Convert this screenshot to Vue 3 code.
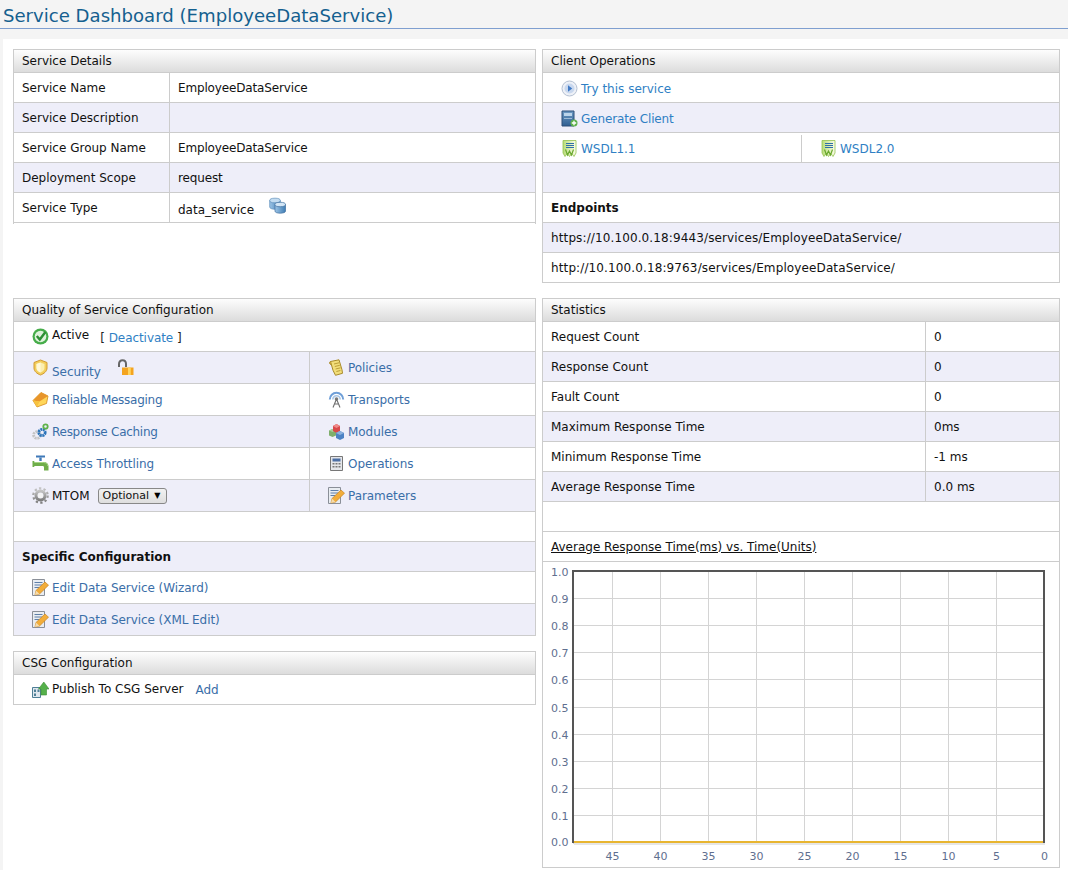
<template>
  <div class="page">
    <svg class="defs">
      <defs>
        <linearGradient id="g-gear" x1="0" y1="0" x2="0" y2="1">
          <stop offset="0" stop-color="#c4c4c4" />
          <stop offset="1" stop-color="#7e7e7e" />
        </linearGradient>
        <linearGradient id="g-book" x1="0" y1="0" x2="0" y2="1">
          <stop offset="0" stop-color="#6e9ac4" />
          <stop offset="1" stop-color="#2f5f92" />
        </linearGradient>
        <linearGradient id="g-wsdl" x1="0" y1="0" x2="1" y2="0">
          <stop offset="0" stop-color="#b8dc78" />
          <stop offset="1" stop-color="#fbfde8" />
        </linearGradient>
        <linearGradient id="g-can" x1="0" y1="0" x2="1" y2="0">
          <stop offset="0" stop-color="#9cc4e6" />
          <stop offset="1" stop-color="#3f7db4" />
        </linearGradient>
      </defs>
      <symbol id="i-try" viewBox="0 0 17 17">
        <circle cx="8.500" cy="8.500" r="7.500" fill="#eef1f7" stroke="#b4c0d2" />
        <circle cx="8.500" cy="8.500" r="5" fill="#c9d8ee" />
        <path d="M7 5.200 11.200 8.500 7 11.800z" fill="#3f79c4" />
      </symbol>
      <symbol id="i-client" viewBox="0 0 17 17">
        <path d="M1 1h12v15H1z" fill="url(#g-book)" stroke="#2c4f78" />
        <path d="M3 3h8v3H3z" fill="#bcd4ea" />
        <path d="M3 8h8v1H3z" fill="#9dbad6" />
        <circle cx="13" cy="13" r="3.500" fill="#5db04a" />
        <path d="M13 10.800v4.400M10.800 13h4.400" stroke="#fff" stroke-width="1.300" />
      </symbol>
      <symbol id="i-wsdl" viewBox="0 0 17 17">
        <path d="M2 .5h13V13l-2 3.500-2.200-3-2.300 3-2.300-3-2.200 3-2-3.500z" fill="url(#g-wsdl)" stroke="#93c14f" stroke-width=".8" />
        <path d="M5 3.500h8M5 5.500h8M5 7.500h8" stroke="#2f6fa8" stroke-width="1.100" />
        <path d="m4.500 9.500 2 5.500 2-4 2 4 2-5.500" fill="none" stroke="#6aa82f" stroke-width="1.200" />
      </symbol>
      <symbol id="i-db" viewBox="0 0 17 16">
        <path d="M.7 3v6.500c0 1.300 2.300 2.300 5.300 2.300s5.300-1 5.300-2.300V3z" fill="url(#g-can)" stroke="#5f8fbb" stroke-width=".7" />
        <ellipse cx="6" cy="3" rx="5.300" ry="2.300" fill="#c3dcf1" stroke="#5f8fbb" stroke-width=".7" />
        <path d="M6 7v6.700c0 1.200 2.300 2 5.200 2s5.300-.8 5.300-2V7z" fill="url(#g-can)" stroke="#3f6f9f" stroke-width=".7" />
        <ellipse cx="11.200" cy="7" rx="5.300" ry="2.200" fill="#d3e6f6" stroke="#3f6f9f" stroke-width=".7" />
      </symbol>
      <symbol id="i-active" viewBox="0 0 17 17">
        <circle cx="8.500" cy="8.500" r="8" fill="#46ad4a" />
        <circle cx="8.500" cy="8.500" r="5.800" fill="#dff2dc" />
        <path d="m4.800 8 3 3.500 5.600-7.500" fill="none" stroke="#2e8f35" stroke-width="2.400" />
      </symbol>
      <symbol id="i-shield" viewBox="0 0 17 17">
        <path d="M8.500 1 15 3.500V9c0 3.300-3 5.700-6.500 7C5 14.700 2 12.300 2 9V3.500z" fill="#f3cf5c" stroke="#d29a32" />
        <path d="M8.500 3.500 12.500 5v4c0 2-1.800 3.500-4 4.500-2.200-1-4-2.500-4-4.500V5z" fill="#fbeeb0" />
        <path d="M8.500 3.500v10c-2.200-1-4-2.500-4-4.500V5z" fill="#fff8d8" />
      </symbol>
      <symbol id="i-lock" viewBox="0 0 17 17">
        <path d="M2 8V5c0-2.300 1.500-3.800 3.500-3.800S9 2.700 9 5v3" fill="none" stroke="#666" stroke-width="2" />
        <path d="M5 8.500h11.500V16H5z" fill="#f4a41f" />
        <path d="M11 8.500h2.800V16H11z" fill="#ffd45f" />
      </symbol>
      <symbol id="i-policy" viewBox="0 0 17 17">
        <path d="M2.500 2.500 11 .8l3 10 .5 3.500-7 2-2.500-5z" fill="#f2de7a" stroke="#a88a2a" />
        <path d="M6 5l5-1.200M6.800 7.500l5-1.200M7.600 10l5-1.200M8.400 12.500l4-1" stroke="#b6962f" stroke-width=".9" />
        <path d="M2.500 2.500C.8 3.200 1.500 5.500 3.700 6" fill="#c9a53a" stroke="#a88a2a" />
      </symbol>
      <symbol id="i-reliable" viewBox="0 0 17 17">
        <path d="M1 9.500 9 1.500l7 3.500-1.500 7.500L5 16z" fill="#ffd659" stroke="#d58a1c" stroke-width=".8" />
        <path d="M1 9.500 9 1.500l7 3.500-8.500 5.500z" fill="#e8952b" />
        <path d="m1 9.500 6.500 1L5 16z" fill="#f7c23f" />
      </symbol>
      <symbol id="i-transport" viewBox="0 0 17 17">
        <path d="M1.800 8.500a6.700 6.700 0 0 1 13.400 0" fill="none" stroke="#6f9fd8" stroke-width="2" />
        <path d="M4.800 8.500a3.700 3.700 0 0 1 7.400 0" fill="none" stroke="#a9c6e6" stroke-width="1.600" />
        <circle cx="8.500" cy="8" r="1.800" fill="#7f7f7f" />
        <path d="m8.500 8-3.500 8.500M8.500 8l3.500 8.500M6.300 13h4.400" stroke="#6f6f6f" stroke-width="1.100" fill="none" />
      </symbol>
      <symbol id="i-cache" viewBox="0 0 17 17">
        <circle cx="5" cy="12" r="3.400" fill="none" stroke="#c4c4c4" stroke-width="2.800" stroke-dasharray="2 .8" />
        <circle cx="10" cy="9.500" r="3.200" fill="none" stroke="#2c74ba" stroke-width="2.800" stroke-dasharray="2 .6" />
        <circle cx="13.500" cy="3.500" r="2.200" fill="none" stroke="#5fb24a" stroke-width="1.800" />
      </symbol>
      <symbol id="i-modules" viewBox="0 0 17 17">
        <path d="M1 7.500 4.500 6 8 7.500v5L4.500 14 1 12.500z" fill="#7fae6c" />
        <path d="M1 7.500 4.500 6 8 7.500 4.500 9z" fill="#a8cb98" />
        <path d="M5 3 8.500 1 12 3v5L8.500 10 5 8z" fill="#d8484a" />
        <path d="M5 3 8.500 1 12 3 8.500 5z" fill="#ee8a8a" />
        <path d="M8 10 12 8l4 2v5l-4 2-4-2z" fill="#4c82c4" />
        <path d="M8 10 12 8l4 2-4 2z" fill="#8cb2de" />
      </symbol>
      <symbol id="i-throttle" viewBox="0 0 17 17">
        <path d="M4 .5h9V2.500H4z" fill="#3f79b8" />
        <path d="M7.300 2.500h2.400V6H7.300z" fill="#3f79b8" />
        <path d="M.5 6h1.800v1h9.200c3.300 0 5 1.800 5 4.500v4H12v-3c0-1-.5-1.500-1.500-1.500H2.300v1H.5z" fill="#6fae4a" />
        <path d="M2.300 7.500h9c2.800 0 4.300 1.300 4.500 3.500" fill="none" stroke="#a6d585" />
      </symbol>
      <symbol id="i-ops" viewBox="0 0 17 17">
        <path d="M2.500 1.500h12v14h-12z" fill="#e4e6ea" stroke="#777" />
        <path d="M4.500 3.500h8v3h-8z" fill="#4c6fa5" />
        <path d="M4.500 8h2v1.500h-2zM7.500 8h2v1.500h-2zM10.500 8h2v1.500h-2zM4.500 11h2v1.500h-2zM7.500 11h2v1.500h-2zM10.500 11h2v1.500h-2z" fill="#777" />
      </symbol>
      <symbol id="i-edit" viewBox="0 0 17 17">
        <path d="M.5 .5h12v16H.5z" fill="#e9edf2" stroke="#8a8f98" />
        <path d="M2.500 3.500h8M2.500 6h8M2.500 8.500h5" stroke="#5f7fa8" />
        <path d="m3 16 1-4.500L13 3l3.500 3.200L7.500 15z" fill="#f2ad3a" stroke="#c98420" stroke-width=".7" />
        <path d="m3 16 1-4.500 3.500 3.500z" fill="#f5dcae" />
      </symbol>
      <symbol id="i-gear" viewBox="0 0 17 17">
        <circle cx="8.500" cy="8.500" r="7.200" fill="none" stroke="url(#g-gear)" stroke-width="2.200" stroke-dasharray="2.300 2.300" />
        <circle cx="8.500" cy="8.500" r="4.500" fill="none" stroke="url(#g-gear)" stroke-width="3" />
        <circle cx="8.500" cy="8.500" r="2.600" fill="#f4f4f4" />
      </symbol>
      <symbol id="i-publish" viewBox="0 0 17 17">
        <path d="M.5 6.500h8v10h-8z" fill="#dfe7ee" stroke="#4f7f96" />
        <path d="M2 8.500h2v2.500H2zM5.500 8.500h2v2.500h-2zM2 12.500h2V15H2z" fill="#4f7f96" />
        <path d="M9 14V8H6.500L11.800 1 17 8h-2.500v6z" fill="#55b04a" stroke="#3c8f36" stroke-width=".6" />
      </symbol>
    </svg>

    <h1 class="page-title">Service Dashboard (EmployeeDataService)</h1>

    <div class="content">
      <div class="col">
        <section class="panel details">
          <h3 class="panel-head">Service Details</h3>
          <div v-for="(d, i) in details" :key="d.label" class="row" :class="{ alt: i % 2 }">
            <div class="cell label-cell">{{ d.label }}</div>
            <div class="cell service-value">
              <span :class="{ nudge: d.icon }">{{ d.value }}</span>
              <svg v-if="d.icon" class="ic db"><use href="#i-db" /></svg>
            </div>
          </div>
        </section>

        <section class="panel qos">
          <h3 class="panel-head">Quality of Service Configuration</h3>
          <div class="row pad">
            <svg class="ic"><use href="#i-active" /></svg>
            <span class="raise">Active</span>
            <span class="bracket">[ <a class="link top">Deactivate</a> ]</span>
          </div>
          <div v-for="(q, i) in qos" :key="q.right" class="row tall" :class="{ alt: i % 2 === 0 }">
            <div class="cell qos-left">
              <svg class="ic"><use :href="q.leftIcon" /></svg>
              <template v-if="q.mtom">
                <span>MTOM</span>
                <span class="select">Optional <i class="arrow">▼</i></span>
              </template>
              <a v-else class="link" :class="{ tight: q.tight, drop: q.lock }">{{ q.left }}</a>
              <svg v-if="q.lock" class="ic lock"><use href="#i-lock" /></svg>
            </div>
            <div class="cell qos-right">
              <svg class="ic"><use :href="q.rightIcon" /></svg>
              <a class="link">{{ q.right }}</a>
            </div>
          </div>
          <div class="row"></div>
          <div class="row alt text-row"><b>Specific Configuration</b></div>
          <div class="row tall pad">
            <svg class="ic"><use href="#i-edit" /></svg>
            <a class="link">Edit Data Service (Wizard)</a>
          </div>
          <div class="row tall pad alt">
            <svg class="ic"><use href="#i-edit" /></svg>
            <a class="link">Edit Data Service (XML Edit)</a>
          </div>
        </section>

        <section class="panel csg">
          <h3 class="panel-head">CSG Configuration</h3>
          <div class="row pad">
            <svg class="ic"><use href="#i-publish" /></svg>
            <span class="raise-1">Publish To CSG Server</span>
            <a class="link add">Add</a>
          </div>
        </section>
      </div>

      <div class="col">
        <section class="panel client">
          <h3 class="panel-head">Client Operations</h3>
          <div class="row pad low">
            <svg class="ic"><use href="#i-try" /></svg>
            <a class="link top">Try this service</a>
          </div>
          <div class="row pad low alt">
            <svg class="ic"><use href="#i-client" /></svg>
            <a class="link top gen">Generate Client</a>
          </div>
          <div class="row low">
            <div class="cell wsdl first">
              <svg class="ic"><use href="#i-wsdl" /></svg>
              <a class="link top">WSDL1.1</a>
            </div>
            <div class="cell wsdl">
              <svg class="ic"><use href="#i-wsdl" /></svg>
              <a class="link top">WSDL2.0</a>
            </div>
          </div>
          <div class="row alt"></div>
          <div class="row text-row"><b>Endpoints</b></div>
          <div class="row text-row alt endpoint">https://10.100.0.18:9443/services/EmployeeDataService/</div>
          <div class="row text-row endpoint">http://10.100.0.18:9763/services/EmployeeDataService/</div>
        </section>

        <section class="panel stats">
          <h3 class="panel-head">Statistics</h3>
          <div v-for="(s, i) in stats" :key="s.label" class="row" :class="{ alt: i % 2 }">
            <div class="cell stat-label">{{ s.label }}</div>
            <div class="cell">{{ s.value }}</div>
          </div>
          <div class="row"></div>
          <div class="row text-row"><u>Average Response Time(ms) vs. Time(Units)</u></div>
          <svg class="chart" width="516" height="305" viewBox="0 0 516 305">
            <line v-for="x in vLines" :key="'v' + x" :x1="x" :x2="x" y1="9" y2="280" class="grid" />
            <line v-for="t in yTicks" :key="'h' + t.y" x1="30" x2="501" :y1="t.y" :y2="t.y" class="grid" />
            <text v-for="t in yTicks" :key="'y' + t.y" x="8" :y="t.labelY" class="tick">{{ t.label }}</text>
            <text v-for="t in xTicks" :key="'x' + t.label" :x="t.x" y="298" text-anchor="middle" class="tick">{{ t.label }}</text>
            <line x1="31" x2="502" y1="282" y2="282" class="shadow" />
            <rect x="30" y="9" width="471" height="271" class="frame" />
            <line x1="31" x2="500" y1="280" y2="280" class="series" />
          </svg>
        </section>
      </div>
    </div>
  </div>
</template>

<script setup>
const details = [
  { label: 'Service Name', value: 'EmployeeDataService' },
  { label: 'Service Description', value: '' },
  { label: 'Service Group Name', value: 'EmployeeDataService' },
  { label: 'Deployment Scope', value: 'request' },
  { label: 'Service Type', value: 'data_service', icon: true },
]

const qos = [
  { left: 'Security', leftIcon: '#i-shield', lock: true, right: 'Policies', rightIcon: '#i-policy' },
  { left: 'Reliable Messaging', leftIcon: '#i-reliable', tight: true, right: 'Transports', rightIcon: '#i-transport' },
  { left: 'Response Caching', leftIcon: '#i-cache', tight: true, right: 'Modules', rightIcon: '#i-modules' },
  { left: 'Access Throttling', leftIcon: '#i-throttle', right: 'Operations', rightIcon: '#i-ops' },
  { mtom: true, leftIcon: '#i-gear', right: 'Parameters', rightIcon: '#i-edit' },
]

const stats = [
  { label: 'Request Count', value: '0' },
  { label: 'Response Count', value: '0' },
  { label: 'Fault Count', value: '0' },
  { label: 'Maximum Response Time', value: '0ms' },
  { label: 'Minimum Response Time', value: '-1 ms' },
  { label: 'Average Response Time', value: '0.0 ms' },
]

// chart axes
const vLines = [69.5, 117.5, 165.5, 213.5, 261.5, 309.5, 357.5, 405.5, 453.5]
const yTicks = Array.from({ length: 11 }, (_, i) => {
  const y = Math.floor(9 + i * 27.2) + 0.5
  return { label: (1 - i / 10).toFixed(1), y, labelY: i === 10 ? y + 2 : y + 4 }
})
const xTicks = [45, 40, 35, 30, 25, 20, 15, 10, 5, 0].map((n, i) => ({ label: String(n), x: 69.5 + i * 48 }))
</script>

<style>
html,
body {
  background: #f4f4f4;
}
</style>

<style scoped>
.page {
  width: 1068px;
  font-family: "DejaVu Sans", Verdana, sans-serif;
  font-size: 12px;
  color: #111;
  overflow: hidden;
}

.defs {
  display: block;
  width: 0;
  height: 0;
}

.page-title {
  margin: 0 0 10px;
  height: 28px;
  line-height: 32px;
  padding-left: 3px;
  font-size: 18.1px;
  font-weight: normal;
  color: #14608f;
  border-bottom: 1px solid #7f9fd0;
  white-space: nowrap;
}

.content {
  margin-left: 3px;
  padding: 10px 8px 3px 10px;
  background: #fff;
  display: grid;
  grid-template-columns: 523px 518px;
  column-gap: 6px;
  align-items: start;
}

.panel {
  border: 1px solid #ccc;
  border-bottom: 0;
}

.panel-head {
  margin: 0;
  height: 23px;
  line-height: 22px;
  padding-left: 8px;
  font-size: 12px;
  font-weight: normal;
  color: #111;
  background: linear-gradient(#fdfdfd, #dcdcdc);
  border-bottom: 1px solid #ccc;
  box-sizing: border-box;
}

.row {
  height: 30px;
  box-sizing: border-box;
  border-bottom: 1px solid #ccc;
  display: flex;
  align-items: center;
}

.row.tall {
  height: 32px;
}

.alt {
  background: #eeeef9;
}

.cell {
  padding-left: 8px;
  height: 100%;
  box-sizing: border-box;
  display: flex;
  align-items: center;
}

.text-row {
  padding-left: 8px;
}

.label-cell {
  width: 156px;
  flex: none;
  border-right: 1px solid #ccc;
}

.service-value {
  letter-spacing: -0.15px;
}

.endpoint {
  letter-spacing: 0.12px;
}

.pad {
  padding-left: 18px;
}

.low {
  padding-top: 2px;
}

.ic {
  width: 17px;
  height: 17px;
  flex: none;
  margin-right: 3px;
}

.link {
  color: #3a6ea8;
  text-decoration: none;
}

.qos .link {
  letter-spacing: -0.06px;
}

.link.top {
  color: #2f7fc4;
}

.gen {
  letter-spacing: -0.13px;
}

.qos .tight {
  letter-spacing: -0.27px;
}

.drop {
  position: relative;
  top: 4px;
}

.raise {
  position: relative;
  top: -2px;
}

.raise-1 {
  position: relative;
  top: -1px;
}

.nudge {
  position: relative;
  top: 2px;
  letter-spacing: 0;
}

.db {
  margin-left: 15px;
  position: relative;
  top: -2px;
}

.details {
  height: 174px;
  margin-bottom: 74px;
}

.bracket {
  margin-left: 11px;
  color: #222;
  position: relative;
  top: 1px;
}

.qos-left {
  width: 296px;
  flex: none;
  padding-left: 18px;
  border-right: 1px solid #ccc;
}

.qos-right {
  padding-left: 18px;
}

.lock {
  margin-left: 16px;
}

.select {
  margin-left: 9px;
  width: 69px;
  height: 16px;
  padding: 0 6px 0 3px;
  box-sizing: border-box;
  display: inline-flex;
  align-items: center;
  justify-content: space-between;
  font-size: 11px;
  color: #111;
  border: 1px solid #888;
  border-radius: 3px;
  background: linear-gradient(#f2f2f2, #dedede);
  white-space: nowrap;
}

.arrow {
  font-style: normal;
  font-size: 8px;
  color: #000;
}

.qos {
  margin-bottom: 15px;
}

.add {
  margin-left: 12px;
}

.client {
  margin-bottom: 15px;
}

.wsdl {
  padding-left: 18px;
}

.wsdl.first {
  width: 259px;
  flex: none;
  border-right: 1px solid #ccc;
}

.stat-label {
  width: 383px;
  flex: none;
  border-right: 1px solid #ccc;
}

.stats {
  border-bottom: 1px solid #ccc;
}

.chart {
  display: block;
}

.grid {
  stroke: #d4d4d4;
  stroke-width: 1;
}

.tick {
  font-size: 11px;
  fill: #5f6f8f;
}

.frame {
  fill: none;
  stroke: #555;
  stroke-width: 2;
}

.series {
  stroke: #e8b530;
  stroke-width: 2;
}

.shadow {
  stroke: #e6e6e6;
  stroke-width: 2;
}
</style>
